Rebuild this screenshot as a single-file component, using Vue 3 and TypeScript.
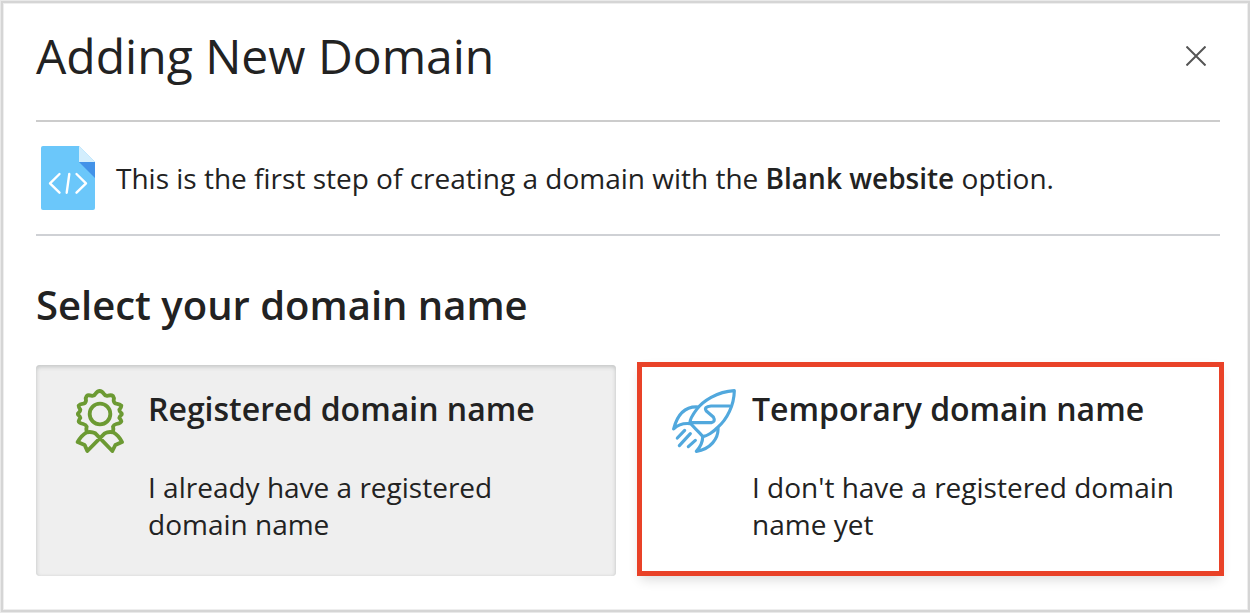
<script setup lang="ts">
import { ref } from 'vue'

type Choice = 'registered' | 'temporary'

const options: { id: Choice; title: string; text: string }[] = [
  { id: 'registered', title: 'Registered domain name', text: 'I already have a registered domain name' },
  { id: 'temporary', title: 'Temporary domain name', text: "I don't have a registered domain name yet" },
]

const selected = ref<Choice>('temporary')
</script>

<template>
  <main class="dialog" role="dialog" aria-labelledby="dialog-title">
    <header class="header">
      <h1 id="dialog-title">Adding New Domain</h1>
      <button class="close" type="button" aria-label="Close">
        <svg width="20" height="20" viewBox="0 0 20 20" fill="none" stroke="#555" stroke-width="2">
          <path d="M.5 .5l19 19M19.500 .5l-19 19" />
        </svg>
      </button>
    </header>

    <div class="info">
      <svg class="file" width="54" height="64" viewBox="0 0 54 64">
        <path d="M2 0H38L54 16V62Q54 64 52 64H2Q0 64 0 62V2Q0 0 2 0Z" fill="#6bc7fa" />
        <path d="M38 16H54V32Z" fill="#4292e8" />
        <path d="M38 0L54 16H38Z" fill="#d3eefd" />
        <path
          d="M18.500 28L9 37.300L18.500 46.700M28.300 28L25.700 46.700M35.500 28L45 37.300L35.500 46.700"
          fill="none" stroke="#fff" stroke-width="2.400" stroke-linecap="round" stroke-linejoin="round"
        />
      </svg>
      <p>This is the first step of creating a domain with the <strong>Blank website</strong> option.</p>
    </div>

    <h2>Select your domain name</h2>

    <div class="cards">
      <button
        v-for="o in options"
        :key="o.id"
        type="button"
        class="card"
        :class="{ selected: selected === o.id }"
        :aria-pressed="selected === o.id"
        @click="selected = o.id"
      >
        <svg
          v-if="o.id === 'registered'" class="icon" width="64" height="64" viewBox="6 27 192 192"
          fill="none" stroke="#6c9a33" stroke-width="11.500" stroke-linejoin="round" stroke-linecap="round"
        >
          <path
            d="M62 154Q60 146 62 140Q60 134 52 132Q38 129 38 124Q39 118 43 114Q42 109 38 106Q33 102 38 98Q43 94 43 89Q38 82 38 77Q41 73 52 71Q59 69 60 62Q58 53 62 48Q66 44 76 47Q84 49 88 42Q94 33 101 33Q108 33 114 42Q118 49 126 47Q136 44 141 48Q145 53 143 62Q144 69 151 71Q162 73 166 77Q166 82 160 89Q160 94 165 98Q170 102 165 106Q161 109 160 114Q165 119 166 124Q165 129 151 132Q143 134 141 140Q143 146 141 154"
          />
          <circle cx="102" cy="102" r="31" />
          <path
            d="M62 157Q76 154 88 160L139 213L148 195L168 186Q158 166 142 157Q127 154 116 160L64 213L56 195L35 186Q46 166 62 157Z"
          />
        </svg>
        <svg
          v-else class="icon" width="64" height="64" viewBox="24 27 192 192"
          fill="none" stroke="#51a8dd" stroke-width="9.500" stroke-linejoin="round" stroke-linecap="round"
        >
          <path
            d="M211 32C158 35 116 64 98 88C86 104 77 117 78 128C90 142 105 157 116 169C128 170 150 154 160 143C190 118 210 75 211 32Z"
          />
          <path d="M197 78H141Q118 80 127 93L148 111Q156 125 142 128H78" />
          <path d="M102 81C68 79 42 96 29 147Q48 128 78 131" />
          <path d="M162 144C164 176 139 208 97 214Q117 192 116 169" />
          <path d="M62 151L40 174M79 161L46 197M94 181L73 200" />
        </svg>
        <span class="body">
          <span class="title">{{ o.title }}</span>
          <span class="text">{{ o.text }}</span>
        </span>
      </button>
    </div>
  </main>
</template>

<style>
body {
  margin: 0;
  background: #fff;
}
</style>

<style scoped>
.dialog {
  box-sizing: border-box;
  min-height: calc(100vh - 3px);
  margin: 1px 0 2px 1px;
  padding: 0 28px 33px 33px;
  border: 2px solid #d5d5d5;
  box-shadow: 0 0 0 1px #e9e9e9, inset 0 0 0 1px #eee;
  color: #222;
  background: #fff;
  font-family: "Open Sans", "Noto Sans", sans-serif;
}

.header {
  display: flex;
  align-items: center;
  justify-content: space-between;
  padding: 20px 14px 31px 0;
  border-bottom: 2px solid #ccc;
}

h1,
h2,
p {
  margin: 0;
}

h1 {
  font-size: 48px;
  line-height: 66px;
  font-weight: 400;
}

.close {
  display: flex;
  padding: 0;
  border: 0;
  background: none;
  cursor: pointer;
}

.info {
  display: flex;
  align-items: center;
  gap: 21px;
  padding: 24px 5px;
  border-bottom: 2px solid #cfd1d5;
  font-size: 28px;
  line-height: 38px;
}

.file,
.icon {
  flex: none;
}

strong {
  font-weight: 600;
}

h2 {
  margin-top: 42px;
  font-size: 40px;
  line-height: 54px;
  font-weight: 600;
}

.cards {
  display: grid;
  grid-template-columns: 1fr 1fr;
  gap: 24px;
  margin-top: 33px;
}

.card {
  position: relative;
  display: flex;
  align-items: flex-start;
  gap: 16px;
  padding: 24px 32px 33px;
  border: 0;
  border-radius: 4px;
  background: #efefef;
  box-shadow: inset 0 2px 4px #c6c8c8, inset 0 0 3px #ddd;
  color: inherit;
  font: inherit;
  text-align: left;
  cursor: pointer;
}

.card.selected {
  background: #fff;
  box-shadow: 0 4px 12px #ddd;
}

.card.selected::after {
  content: "";
  position: absolute;
  inset: -3px -4px 0 -3px;
  border: 5px solid #e94228;
}

.body {
  display: flex;
  flex-direction: column;
  gap: 40px;
}

.title {
  font-size: 32px;
  line-height: 40px;
  font-weight: 600;
}

.text {
  font-size: 28px;
  line-height: 37px;
}
</style>
